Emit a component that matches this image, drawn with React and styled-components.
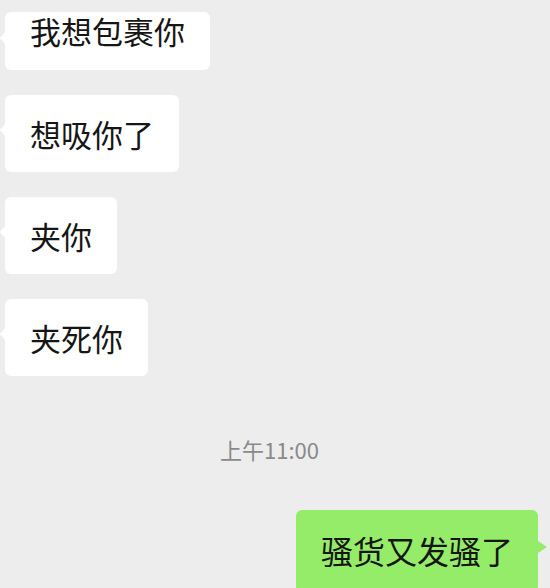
import React from "react";
import styled, { createGlobalStyle } from "styled-components";

const Global = createGlobalStyle`
  html, body { margin: 0; padding: 0; background: #ededed; }
  body { font-family: "Noto Sans CJK SC", "Noto Sans", sans-serif; }
`;

const Screen = styled.div`
  width: 550px;
  height: 588px;
  overflow: hidden;
  background: #ededed;
  display: flex;
  flex-direction: column;
  padding: 12px 12px 0 5px;
  box-sizing: border-box;
`;

const Row = styled.div`
  display: flex;
  justify-content: ${(p) => (p.$mine ? "flex-end" : "flex-start")};
  margin-top: ${(p) => p.$gap || 0}px;
`;

const Bubble = styled.div`
  position: relative;
  background: ${(p) => (p.$mine ? "#95ec69" : "#ffffff")};
  color: #161616;
  font-size: ${(p) => (p.$mine ? 32 : 31)}px;
  line-height: 31px;
  padding: ${(p) => p.$pt ?? 23}px 25px ${(p) => p.$pb ?? 23}px 25px;
  border-radius: 6px;
  white-space: nowrap;

  &::before {
    content: "";
    position: absolute;
    top: ${(p) => p.$tail}px;
    ${(p) => (p.$mine ? "right: -9px;" : "left: -5px;")}
    width: 0;
    height: 0;
    border-top: 6px solid transparent;
    border-bottom: 6px solid transparent;
    ${(p) =>
      p.$mine
        ? "border-left: 9px solid #95ec69;"
        : "border-right: 5px solid #ffffff;"}
  }
`;

const Time = styled.div`
  align-self: center;
  margin: 58px 0 0 -4px;
  font-size: 22px;
  line-height: 30px;
  color: #8a8a8a;
`;

export default function App() {
  return (
    <>
      <Global />
      <Screen>
        <Row>
          <Bubble $pt={3} $pb={24} $tail={20}>我想包裹你</Bubble>
        </Row>
        <Row $gap={25}>
          <Bubble $tail={29}>想吸你了</Bubble>
        </Row>
        <Row $gap={25}>
          <Bubble $tail={29}>夹你</Bubble>
        </Row>
        <Row $gap={25}>
          <Bubble $tail={29}>夹死你</Bubble>
        </Row>
        <Time>上午11:00</Time>
        <Row $mine $gap={46}>
          <Bubble $mine $pt={25} $pb={26} $tail={31}>骚货又发骚了</Bubble>
        </Row>
      </Screen>
    </>
  );
}
